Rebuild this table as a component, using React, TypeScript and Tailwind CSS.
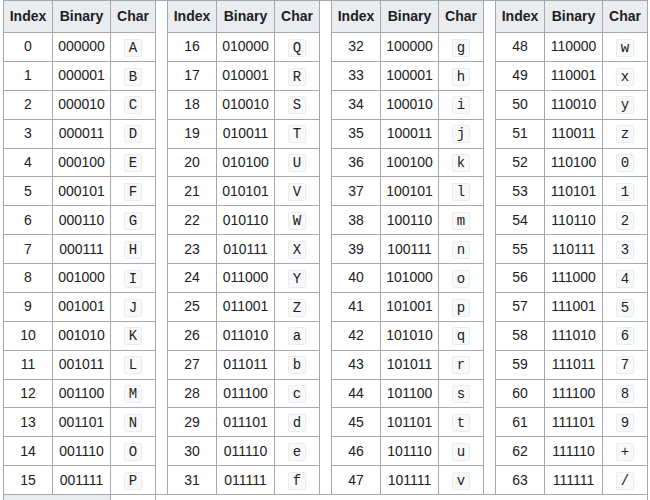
import { Fragment } from 'react';

const CHARS = 'ABCDEFGHIJKLMNOPQRSTUVWXYZabcdefghijklmnopqrstuvwxyz0123456789+/';

const groups = [0, 1, 2, 3];
const rows = Array.from({ length: 16 }, (_, r) => r);

function Code({ children }: { children: React.ReactNode }) {
  return (
    <code className="inline-block h-[18px] min-w-[18px] px-[4px] border border-[#eaecf0] bg-[#f8f9fa] rounded-[2px] font-['Liberation_Mono',monospace] text-[14px] leading-[16px] align-middle">
      {children}
    </code>
  );
}

export default function App() {
  return (
    <div className="bg-white w-[650px] h-[500px] overflow-hidden">
      <table className="ml-[3px] w-[645px] table-fixed border-collapse text-[14px] text-[#202122] font-['Liberation_Sans',Arial,sans-serif]">
        <colgroup>
          {groups.map((g) => (
            <Fragment key={g}>
              <col className="w-[49px]" />
              <col className="w-[58px]" />
              <col className="w-[45px]" />
              {g < 3 && <col className="w-[12px]" />}
            </Fragment>
          ))}
        </colgroup>
        <tbody>
          <tr className="h-[32px]">
            {groups.map((g) => (
              <Fragment key={g}>
                <th className="border border-[#a2a9b1] bg-[#eaecf0] font-bold text-center">Index</th>
                <th className="border border-[#a2a9b1] bg-[#eaecf0] font-bold text-center">Binary</th>
                <th className="border border-[#a2a9b1] bg-[#eaecf0] font-bold text-center">Char</th>
                {g < 3 && <td rowSpan={17} className="border border-[#a2a9b1] bg-white" />}
              </Fragment>
            ))}
          </tr>
          {rows.map((r) => (
            <tr key={r} className="h-[28.875px]">
              {groups.map((g) => {
                const n = g * 16 + r;
                return (
                  <Fragment key={g}>
                    <td className="border border-[#a2a9b1] text-center">{n}</td>
                    <td className="border border-[#a2a9b1] text-center">{n.toString(2).padStart(6, '0')}</td>
                    <td className="border border-[#a2a9b1] text-center">
                      <Code>{CHARS[n]}</Code>
                    </td>
                  </Fragment>
                );
              })}
            </tr>
          ))}
          <tr className="h-[29px]">
            <th colSpan={2} className="border border-[#a2a9b1] bg-[#eaecf0] font-bold text-center">Padding</th>
            <td className="border border-[#a2a9b1] text-center">
              <Code>=</Code>
            </td>
            <td colSpan={13} className="border border-[#a2a9b1]" />
          </tr>
        </tbody>
      </table>
    </div>
  );
}
